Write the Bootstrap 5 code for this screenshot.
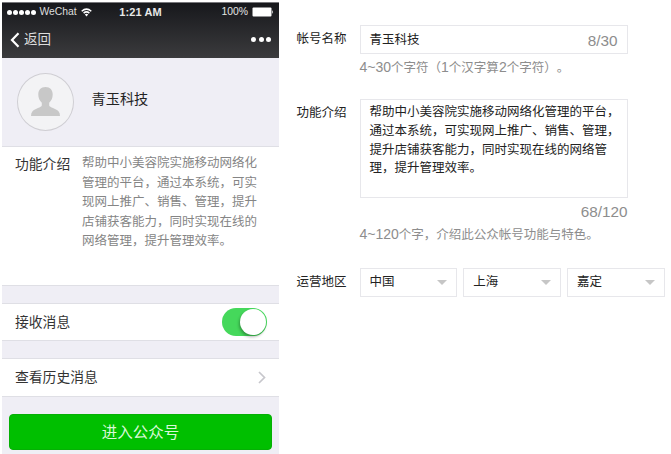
<!DOCTYPE html>
<html lang="zh-CN">
<head>
<meta charset="utf-8">
<meta name="viewport" content="width=device-width, initial-scale=1">
<title>公众号设置</title>
<link href="https://cdn.jsdelivr.net/npm/bootstrap@5.3.0/dist/css/bootstrap.min.css" rel="stylesheet">
<style>
body{width:671px;height:454px;overflow:hidden;background:#fff;color:#222;font-family:"Liberation Sans","Noto Sans CJK SC",sans-serif;font-size:12.5px;line-height:19px;text-spacing-trim:space-all}
.phone{width:277px;height:452px;margin:2px 0 0 2px;background:#efeef5}
.topbar{height:56px;background:linear-gradient(#17181c,#3b3b3d);border-top:1px solid #77777b;color:#fff}
.status{height:18px;padding:0 5px;font-size:10.4px;line-height:18px}
.status-side{flex:1 1 0}
.signal{gap:1.1px}
.signal i{width:5px;height:5px;border-radius:50%;background:#fff}
.carrier{margin-left:3px;color:#ddd}
.clock{font-size:11px;font-weight:bold;letter-spacing:.1px;color:#e8e8e8}
.percent{color:#e4e4e4}
.navline{height:37px;padding:0 8px;font-size:13.5px;color:#ddd}
.more{gap:2.5px}
.more i{width:5px;height:5px;border-radius:50%;background:#fff}
.profile{height:88px;padding:15px 15px}
.avatar{width:57px;height:58px;border:1px solid #cfced3;border-radius:50%;background:#f3f3f5}
.nick{font-size:14.2px;margin:0 0 6px 17.5px}
.cell{background:#fff;border:solid #dfdfe5;border-width:1px 0;padding:0 13px;font-size:13.8px;color:#333}
.intro{height:140px;padding-top:6px}
.intro-label{width:67px;line-height:24px}
.intro-text{padding-top:1px;font-size:12.5px;line-height:19.6px;color:#858585;white-space:nowrap}
.notify{height:38px;margin-top:17px}
.history{height:39px;margin-top:17px}
.toggle{width:45px;height:28px;padding:1px 1px;border-radius:14px;background:#45d85b;margin-right:-1px}
.toggle span{width:26px;height:26px;border-radius:50%;background:#fff;box-shadow:-1px 2px 3px rgba(0,0,0,.3)}
.enter{width:263px;height:36px;margin:17px 0 0 7px;padding:1px 0 0;border:1px solid #05b005;border-radius:4px;background:#00bf00;color:#d9f8d9;font-size:15.5px;line-height:34px}
.enter:hover{background:#00b400;color:#fff}
.settings{width:368px;margin:25px 0 0 17.500px}
.lab{width:63px;line-height:28px}
.box{border:1px solid #e7e7eb;background:#fff}
.name-box{width:268px;height:29px;padding:1px 9px 0}
.name-row{height:74px}
.desc-row{height:169px}
.count{font-size:15.3px;color:#8d8d8d}
.hint{color:#8d8d8d}
.hint b{font-weight:normal;font-size:14px}
.desc-box{width:268px;height:99px;padding:3px 9px;line-height:18.8px;white-space:nowrap}
.pick{width:97.5px;height:29px;padding:0 9px}
.caret{border:5px solid transparent;border-top-color:#c6c6c6;border-bottom:0}
</style>
<script src="https://cdn.jsdelivr.net/npm/bootstrap@5.3.0/dist/js/bootstrap.bundle.min.js"></script>
</head>
<body class="d-flex align-items-start">
<section class="phone flex-shrink-0">
  <header class="topbar">
    <div class="status d-flex align-items-center">
      <div class="status-side d-flex align-items-center">
        <div class="signal d-flex"><i></i><i></i><i></i><i></i><i></i></div>
        <span class="carrier">WeChat</span>
        <svg class="ms-1 flex-shrink-0" width="11" height="9" viewBox="0 0 11 9" fill="none" stroke="#fff" stroke-width="1.5"><path d="M.7 3.2Q5.5-1 10.3 3.2M2.6 5.1Q5.5 2.6 8.4 5.1"/><path d="M3.8 6.5Q5.5 5.2 7.2 6.5L5.5 8.5z" fill="#fff" stroke="none"/></svg>
      </div>
      <span class="clock">1:21 AM</span>
      <div class="status-side d-flex align-items-center justify-content-end">
        <span class="percent">100%</span>
        <svg class="ms-1" width="22" height="10" viewBox="0 0 22 10"><rect x=".5" y=".5" width="19" height="9" rx="1" fill="#fff"/><path d="M20.2 3Q22 5 20.2 7z" fill="#fff"/></svg>
      </div>
    </div>
    <div class="navline d-flex align-items-center justify-content-between">
      <div class="d-flex align-items-center">
        <svg width="10" height="16" viewBox="0 0 10 16" fill="none" stroke="#fff" stroke-width="2.2"><path d="M8.5 1.3L2 8l6.500 6.700"/></svg>
        <span class="ms-1">返回</span>
      </div>
      <div class="more d-flex"><i></i><i></i><i></i></div>
    </div>
  </header>
  <div class="profile d-flex align-items-center">
    <div class="avatar d-flex align-items-center justify-content-center flex-shrink-0">
      <svg width="29" height="30" viewBox="0 0 29 30"><path d="M14.500 0C9.800 0 7.300 3 7.300 7.500C7.300 11 8.600 13.800 10.800 15.700V18.500C10.500 20.500 4 21.500 1.500 24.200Q0 25.800 0 29H29Q29 25.800 27.500 24.200C25 21.500 18.500 20.500 18.200 18.500V15.700C20.400 13.800 21.700 11 21.700 7.500C21.700 3 19.200 0 14.500 0z" fill="#c8c8c8"/></svg>
    </div>
    <span class="nick">青玉科技</span>
  </div>
  <div class="cell intro d-flex">
    <div class="intro-label">功能介绍</div>
    <div class="intro-text">帮助中小美容院实施移动网络化<br>管理的平台，通过本系统，可实<br>现网上推广、销售、管理，提升<br>店铺获客能力，同时实现在线的<br>网络管理，提升管理效率。</div>
  </div>
  <div class="cell d-flex align-items-center justify-content-between notify">
    <span>接收消息</span>
    <div class="toggle d-flex justify-content-end"><span></span></div>
  </div>
  <div class="cell d-flex align-items-center justify-content-between history">
    <span>查看历史消息</span>
    <svg width="8" height="13" viewBox="0 0 8 13" fill="none" stroke="#c7c7cc" stroke-width="1.700"><path d="M1 1l5.500 5.500L1 12"/></svg>
  </div>
  <button class="btn enter d-block" type="button">进入公众号</button>
</section>
<main class="settings flex-shrink-0">
  <div class="name-row d-flex">
    <div class="lab flex-shrink-0">帐号名称</div>
    <div>
      <div class="box name-box d-flex align-items-center justify-content-between"><span>青玉科技</span><span class="count">8/30</span></div>
      <div class="hint mt-1"><b>4~30</b>个字符（<b>1</b>个汉字算<b>2</b>个字符）。</div>
    </div>
  </div>
  <div class="desc-row d-flex">
    <div class="lab flex-shrink-0">功能介绍</div>
    <div>
      <div class="box desc-box">帮助中小美容院实施移动网络化管理的平台，<br>通过本系统，可实现网上推广、销售、管理，<br>提升店铺获客能力，同时实现在线的网络管<br>理，提升管理效率。</div>
      <div class="count text-end mt-1">68/120</div>
      <div class="hint mt-1"><b>4~120</b>个字，介绍此公众帐号功能与特色。</div>
    </div>
  </div>
  <div class="d-flex">
    <div class="lab flex-shrink-0">运营地区</div>
    <div class="d-flex justify-content-between flex-fill">
      <div class="box pick d-flex align-items-center justify-content-between"><span>中国</span><i class="caret"></i></div>
      <div class="box pick d-flex align-items-center justify-content-between"><span>上海</span><i class="caret"></i></div>
      <div class="box pick d-flex align-items-center justify-content-between"><span>嘉定</span><i class="caret"></i></div>
    </div>
  </div>
</main>
</body>
</html>
